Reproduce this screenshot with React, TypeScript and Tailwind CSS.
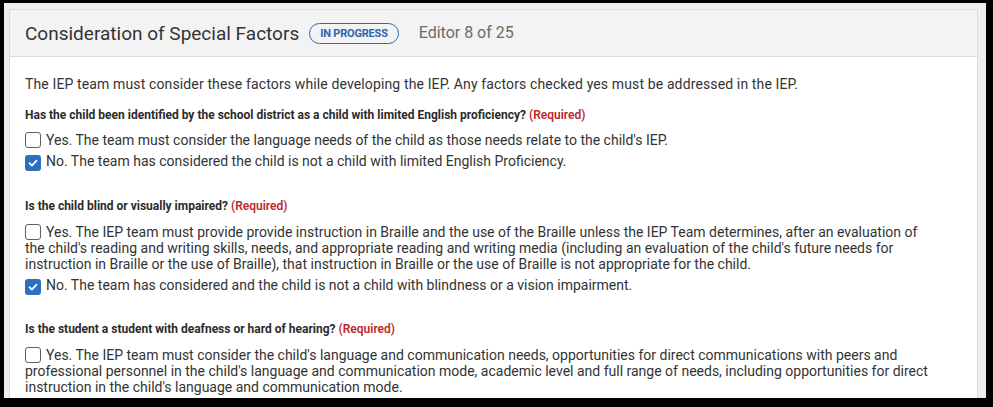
import React from 'react';

interface Option {
  label: string;
  checked: boolean;
}

interface Question {
  title: string;
  options: Option[];
}

const questions: Question[] = [
  {
    title: 'Has the child been identified by the school district as a child with limited English proficiency?',
    options: [
      { label: "Yes. The team must consider the language needs of the child as those needs relate to the child's IEP.", checked: false },
      { label: 'No. The team has considered the child is not a child with limited English Proficiency.', checked: true },
    ],
  },
  {
    title: 'Is the child blind or visually impaired?',
    options: [
      {
        label:
          "Yes. The IEP team must provide provide instruction in Braille and the use of the Braille unless the IEP Team determines, after an evaluation of the child's reading and writing skills, needs, and appropriate reading and writing media (including an evaluation of the child's future needs for instruction in Braille or the use of Braille), that instruction in Braille or the use of Braille is not appropriate for the child.",
        checked: false,
      },
      { label: 'No. The team has considered and the child is not a child with blindness or a vision impairment.', checked: true },
    ],
  },
  {
    title: 'Is the student a student with deafness or hard of hearing?',
    options: [
      {
        label:
          "Yes. The IEP team must consider the child's language and communication needs, opportunities for direct communications with peers and professional personnel in the child's language and communication mode, academic level and full range of needs, including opportunities for direct instruction in the child's language and communication mode.",
        checked: false,
      },
    ],
  },
];

// spacing above each question and above its options, taken from the screenshot
const questionGap = ['mt-[13px]', 'mt-[27px]', 'mt-[26px]'];
const optionsGap = ['mt-[9px]', 'mt-[10px]', 'mt-[10px]'];

function Checkbox({ checked }: { checked: boolean }) {
  if (checked) {
    return (
      <span className="inline-flex items-center justify-center w-[16px] h-[16px] rounded-[3px] bg-[#2a6fc0] align-[-3px] mr-[5px]">
        <svg width="12" height="12" viewBox="0 0 12 12" fill="none">
          <path d="M2.5 6.2l2.4 2.4 4.6-5" stroke="#fff" strokeWidth="1.8" strokeLinecap="round" strokeLinejoin="round" />
        </svg>
      </span>
    );
  }
  return (
    <span className="inline-block w-[16px] h-[16px] rounded-[3px] border border-[#5f5f5f] bg-white align-[-3px] mr-[5px]" />
  );
}

export default function App() {
  return (
    <div className="w-[993px] h-[407px] bg-black pt-[3px] pl-[4px] pr-[7px] pb-[9px] overflow-hidden" style={{ fontFamily: 'Roboto, "Liberation Sans", sans-serif' }}>
      <div className="h-full bg-[#eeeeee] pt-[6px] pl-[5px] pr-[8px] overflow-hidden">
        <div className="border border-[#dcdcdc] bg-white h-[420px]">
          {/* Header */}
          <div className="h-[47px] bg-[#f3f3f3] border-b border-[#dcdcdc] flex items-center pl-[15px]">
            <h1 className="text-[19px] text-[#333333] leading-none">Consideration of Special Factors</h1>
            <span className="ml-[10px] h-[21px] px-[10px] rounded-full border-[1.5px] border-[#2a66b0] text-[#2a66b0] text-[11px] font-bold flex items-center leading-none tracking-[-0.2px]">
              IN PROGRESS
            </span>
            <span className="ml-[20px] text-[16px] text-[#6b6b6b] leading-none">Editor 8 of 25</span>
          </div>

          {/* Body */}
          <div className="pl-[15px] pt-[17px] w-[923px] text-[#333333]">
            <p className="text-[14px] leading-[20px] tracking-[0.13px]">
              The IEP team must consider these factors while developing the IEP. Any factors checked yes must be addressed in the IEP.
            </p>
            {questions.map((q, qi) => (
              <div key={qi} className={questionGap[qi]}>
                <div className="text-[12px] leading-[16px] font-bold text-[#2b2b2b]">
                  {q.title} <span className="text-[#c0282d] font-semibold">(Required)</span>
                </div>
                <div className={`${optionsGap[qi]} flex flex-col gap-[5px]`}>
                  {q.options.map((o, oi) => (
                    <div key={oi} className="text-[14px] leading-[16px]">
                      <Checkbox checked={o.checked} />
                      {o.label}
                    </div>
                  ))}
                </div>
              </div>
            ))}
          </div>
        </div>
      </div>
    </div>
  );
}
